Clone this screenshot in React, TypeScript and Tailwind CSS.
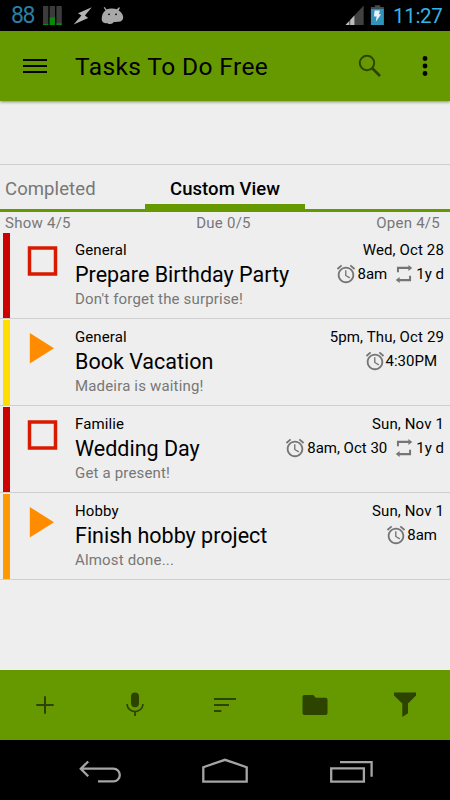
import { FC, ReactNode } from 'react'

interface Task {
  category: string
  title: string
  note: string
  color: string
  started?: boolean
  due: string
  alarm: string
  repeat?: string
}

const tasks: Task[] = [
  {
    category: 'General',
    title: 'Prepare Birthday Party',
    note: "Don't forget the surprise!",
    color: 'bg-[#cc0000]',
    due: 'Wed, Oct 28',
    alarm: '8am',
    repeat: '1y d',
  },
  {
    category: 'General',
    title: 'Book Vacation',
    note: 'Madeira is waiting!',
    color: 'bg-[#ffdd00]',
    started: true,
    due: '5pm, Thu, Oct 29',
    alarm: '4:30PM',
  },
  {
    category: 'Familie',
    title: 'Wedding Day',
    note: 'Get a present!',
    color: 'bg-[#cc0000]',
    due: 'Sun, Nov 1',
    alarm: '8am, Oct 30',
    repeat: '1y d',
  },
  {
    category: 'Hobby',
    title: 'Finish hobby project',
    note: 'Almost done...',
    color: 'bg-[#ff9900]',
    started: true,
    due: 'Sun, Nov 1',
    alarm: '8am',
  },
]

const AlarmIcon: FC = () => (
  <svg className="h-[22px] w-[22px] shrink-0" viewBox="0 0 24 24" fill="#757575">
    <path d="M22 5.72l-4.6-3.86-1.29 1.53 4.6 3.86L22 5.72zM7.88 3.39L6.6 1.86 2 5.71l1.29 1.53 4.59-3.85zM12.5 8H11v6l4.75 2.85.75-1.23-4-2.37V8zM12 4c-4.97 0-9 4.03-9 9s4.02 9 9 9c4.97 0 9-4.03 9-9s-4.03-9-9-9zm0 16c-3.87 0-7-3.13-7-7s3.13-7 7-7 7 3.13 7 7-3.13 7-7 7z" />
  </svg>
)

const RepeatIcon: FC = () => (
  <svg className="h-[22px] w-[22px] shrink-0" viewBox="0 0 24 24" fill="#757575">
    <path d="M4.300 4.200h12.500V2.200l4.200 3.200-4.200 3.200V6.500H6.500V10H4.300zM19.700 19.800H7.200v2L3 18.600l4.200-3.200v2.100h10.300V14h2.200z" />
  </svg>
)

const StatusBar: FC = () => (
  <div className="flex h-[31px] items-center bg-black">
    <span className="ml-[11px] w-[32px] text-[23px] leading-[33px] tracking-[-1.5px] text-[#2a7fa3]">
      88
    </span>
    <svg className="h-[31px] w-[82px]" viewBox="43 0 82 31">
      <g fill="#3b3b3b">
        <rect x="43" y="6" width="5.3" height="19" />
        <rect x="49.7" y="6" width="5.3" height="19" />
        <rect x="56.4" y="6" width="5.4" height="19" />
      </g>
      <g fill="#0a8a0a">
        <rect x="43" y="24" width="5.3" height="1" />
        <rect x="49.7" y="17.5" width="5.3" height="7.5" />
        <rect x="56.4" y="23.3" width="5.4" height="1.7" />
      </g>
      <path
        d="M91.8 7.2L78 13.3l3.4 2.3-7.8 8.8 14.6-6.4-3.3-2.6z"
        fill="#b3b3b3"
      />
      <path
        d="M104.7 7l1.9 2.6c2.7-1.2 7.3-1.4 10.2-.3L119 7.3l1 .5-1.3 2.7c2.4 1.4 4.5 4 4.5 7 0 2.8-2 4-4.7 4.3-1.5.2-3.3.1-4.7.1-.8 1.3-2 2-3.6 2-1.4 0-2.4-.4-3.2-1-3 1-5.3-.8-5.3-3.6 0-3.7 1.3-7 3.8-8.7l-1.8-3z"
        fill="#a8a8a8"
      />
      <circle cx="109" cy="14.3" r=".9" fill="#000" />
      <circle cx="116" cy="14.3" r=".9" fill="#000" />
    </svg>
    <svg className="ml-auto h-[31px] w-[40px]" viewBox="345 0 40 31">
      <path d="M345.5 25L363.7 5.5V25z" fill="#414141" />
      <path d="M345.5 25l3.8-4.1V25zM350.2 25v-5.1l4.2-4.5V25z" fill="#bdbdbd" />
      <path d="M374.8 5.3h5.5V7h3.6v1.7h-13V7h3.9z" fill="#4a4a4a" />
      <rect x="370.9" y="8.7" width="13" height="16.3" fill="#3093bb" />
      <path d="M374.6 10.6h5.3l-1 3.6h2.2l-5.3 7.6.8-5.2h-2.7z" fill="#e8f4f8" />
    </svg>
    <span className="ml-[8px] w-[57px] text-[20.5px] leading-[34px] tracking-[-0.3px] text-[#33b5e5]">
      11:27
    </span>
  </div>
)

const AppBar: FC = () => (
  <header className="z-10 flex h-[70px] items-center bg-[#669900] shadow-[0_1px_3px_rgba(0,0,0,0.45)]">
    <svg className="ml-[22px] h-[24px] w-[26px]" viewBox="0 0 26 24" fill="#000">
      <rect x="1" y="5" width="24" height="2" />
      <rect x="1" y="11" width="24" height="2" />
      <rect x="1" y="17" width="24" height="2" />
    </svg>
    <h1 className="mt-[2px] ml-[27px] text-[24.5px] leading-[32px] tracking-[0.4px] whitespace-nowrap">
      Tasks To Do Free
    </h1>
    <svg
      className="ml-auto h-[30px] w-[30px]"
      viewBox="0 0 30 30"
      fill="none"
      stroke="#2d4400"
    >
      <circle cx="12" cy="12" r="7.2" strokeWidth="2" />
      <path d="M17 17l8 8" strokeWidth="2.7" />
    </svg>
    <svg className="mr-[20px] ml-[35px] h-[24px] w-[10px]" viewBox="0 0 10 24">
      <circle cx="5" cy="4.5" r="2.4" />
      <circle cx="5" cy="12" r="2.4" />
      <circle cx="5" cy="19.5" r="2.4" />
    </svg>
  </header>
)

const Tabs: FC = () => (
  <nav className="mt-[63px] flex h-[48px] border-t border-[#cfcfcf] text-[18.5px] leading-[48px]">
    <span className="w-[145px] border-b-[3px] border-[#669900] pl-[5px] tracking-[0.1px] text-[#777]">
      Completed
    </span>
    <span className="w-[160px] border-b-[8px] border-[#669900] text-center font-medium tracking-[0.05px]">
      Custom View
    </span>
    <span className="flex-1 border-b-[3px] border-[#669900]" />
  </nav>
)

const TaskRow: FC<{ task: Task }> = ({ task }) => (
  <li className="flex h-[87px] border-b border-[#cfcfcf] pl-[3px]">
    <div className={`mt-px w-[7px] ${task.color}`} />
    <svg className="mt-[11px] ml-[14px] h-[36px] w-[36px]" viewBox="24 11 36 36">
      {task.started ? (
        <path d="M29.8 14v30.6L54 29.3z" fill="#ff8c00" />
      ) : (
        <rect
          x="29.5"
          y="16"
          width="26"
          height="26"
          fill="none"
          stroke="#d81a00"
          strokeWidth="3.5"
        />
      )}
    </svg>
    <div className="ml-[15px] pt-[8px] whitespace-nowrap">
      <p className="text-[15px] leading-[20px] tracking-[0.1px]">{task.category}</p>
      <p className="mt-[2px] text-[21.5px] leading-[26px]">{task.title}</p>
      <p className="mt-px text-[15px] leading-[20px] tracking-[0.17px] text-[#777]">
        {task.note}
      </p>
    </div>
    <div className="ml-auto pt-[8px] pr-[6px] text-right text-[15px] leading-[20px] whitespace-nowrap">
      <p className="tracking-[0.13px]">{task.due}</p>
      <div className="mt-[3px] flex items-center justify-end">
        <AlarmIcon />
        <span className={task.repeat ? 'ml-px' : 'mr-[7px]'}>{task.alarm}</span>
        {task.repeat && (
          <>
            <span className="w-[6px]" />
            <RepeatIcon />
            <span className="ml-px">{task.repeat}</span>
          </>
        )}
      </div>
    </div>
  </li>
)

const ToolButton: FC<{ children: ReactNode }> = ({ children }) => (
  <button className="flex flex-1 items-center justify-center">
    <svg className="h-[30px] w-[30px]" viewBox="0 0 30 30" fill="#2d4400">
      {children}
    </svg>
  </button>
)

const BottomBar: FC = () => (
  <div className="flex h-[70px] bg-[#669900]">
    <ToolButton>
      <path d="M6.3 14H14V6.3h2V14h7.7v2H16v7.7h-2V16H6.3z" />
    </ToolButton>
    <ToolButton>
      <rect x="11" y="2.5" width="8" height="14.8" rx="4" />
      <path d="M6.3 14h1.6a7.1 6.7 0 0 0 14.2 0h1.6c0 4.4-3.2 7.7-7.8 8.2V26h-1.8v-3.8c-4.6-.5-7.8-3.8-7.8-8.2z" />
    </ToolButton>
    <ToolButton>
      <path d="M4 8h22v2H4zM4 14h15v2H4zM4 20h7.3v2H4z" />
    </ToolButton>
    <ToolButton>
      <path d="M4.5 5h8.8l2.5 2.7h9.7c1.2 0 2 .8 2 2V23c0 1.200-.8 2-2 2h-21c-1.200 0-2-.8-2-2V7c0-1.200.8-2 2-2z" />
    </ToolButton>
    <ToolButton>
      <path d="M4 2.5h22v3l-8 8.100v9.600L12.300 27V13.600L4 5.500z" />
    </ToolButton>
  </div>
)

const NavBar: FC = () => (
  <div className="h-[60px] bg-black">
    <svg
      className="h-[60px] w-full"
      viewBox="0 740 450 60"
      fill="none"
      stroke="#a5a5a5"
      strokeWidth="2.3"
    >
      <path d="M88.2 761.5l-7.4 7.2 7.4 7.5M81 768.7h32.5a6.3 6.3 0 0 1 0 12.6H98" />
      <path d="M203.3 781.6v-14.4l21.7-7.400 21.700 7.400v14.400z" />
      <path d="M331.2 768.3h32.7v13.3h-32.7zM340 762.2h31.6v14.6" />
    </svg>
  </div>
)

export default function App() {
  return (
    <div className="flex h-[800px] w-[450px] flex-col overflow-hidden bg-[#eeeeee] font-['Roboto',sans-serif] text-black">
      <StatusBar />
      <AppBar />
      <Tabs />
      <div className="flex h-[20px] justify-between pr-[10px] pl-[5px] text-[15px] leading-[22px] tracking-[0.25px] text-[#777]">
        <span>Show 4/5</span>
        <span>Due 0/5</span>
        <span>Open 4/5</span>
      </div>
      <ul className="flex-1">
        {tasks.map((task) => (
          <TaskRow key={task.title} task={task} />
        ))}
      </ul>
      <BottomBar />
      <NavBar />
    </div>
  )
}
